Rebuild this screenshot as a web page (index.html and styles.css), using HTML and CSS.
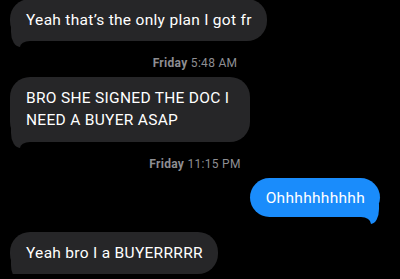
FILE: index.html
```html
<!DOCTYPE html>
<html lang="en">
<head>
    <meta charset="UTF-8">
    <meta name="viewport" content="width=device-width, initial-scale=1.0">
    <title>Messages</title>
    <link rel="stylesheet" href="styles.css">
</head>
<body>
    <div class="thread">
        <div class="row">
            <div class="bubble in first">Yeah that’s the only plan I got fr</div>
        </div>

        <div class="stamp"><b>Friday</b> 5:48 AM</div>

        <div class="row">
            <div class="bubble in wide">BRO SHE SIGNED THE DOC I NEED A BUYER ASAP</div>
        </div>

        <div class="stamp"><b>Friday</b> 11:15 PM</div>

        <div class="row out">
            <div class="bubble me">Ohhhhhhhhhh</div>
        </div>

        <div class="row">
            <div class="bubble in">Yeah bro I a BUYERRRRR</div>
        </div>
    </div>
</body>
</html>
```

FILE: styles.css
```css
/* reset */
* {
    margin: 0;
    padding: 0;
    box-sizing: border-box;
}

body {
    background: #000;
    color: #fff;
    font-family: Roboto, "Liberation Sans", Arial, sans-serif;
    overflow: hidden;
}

/* thread */
.thread {
    display: flex;
    flex-direction: column;
    padding: 0 20px 0 10px;
}

.row {
    display: flex;
}

.row.out {
    justify-content: flex-end;
}

/* bubbles */
.bubble {
    position: relative;
    padding: 10px 15px 10px 16px;
    border-radius: 20px;
    font-size: 15.5px;
    line-height: 22px;
    letter-spacing: 0.3px;
    z-index: 0;
}

.bubble.in {
    background: #262628;
}

.bubble.me {
    background: #1a8cfb;
    margin-bottom: 15px;
    padding: 9px 15px 8px 16px;
}

.bubble.first {
    margin-top: -1px;
}

.bubble.wide {
    width: 240px;
    padding-right: 4px;
    padding-bottom: 11px;
}

/* tails */
.bubble::before,
.bubble::after {
    content: '';
    position: absolute;
    z-index: -1;
}

.bubble.in::before {
    left: 1px;
    bottom: -6px;
    width: 20px;
    height: 20px;
    background: #262628;
    border-bottom-left-radius: 9px 15px;
}

.bubble.in::after {
    left: 10px;
    bottom: -10px;
    width: 20px;
    height: 10px;
    background: #000;
    border-top-left-radius: 10px 6px;
}

.bubble.me::before {
    right: 1px;
    bottom: -7px;
    width: 20px;
    height: 20px;
    background: #1a8cfb;
    border-bottom-right-radius: 8px 15px;
}

.bubble.me::after {
    right: 9px;
    bottom: -11px;
    width: 20px;
    height: 11px;
    background: #000;
    border-top-right-radius: 10px 7px;
}

/* timestamps */
.stamp {
    text-align: center;
    color: #8e8e93;
    font-size: 12px;
    line-height: 14px;
    letter-spacing: 0.3px;
    margin: 15px 0 7px;
}

.stamp b {
    font-weight: 700;
}
```
